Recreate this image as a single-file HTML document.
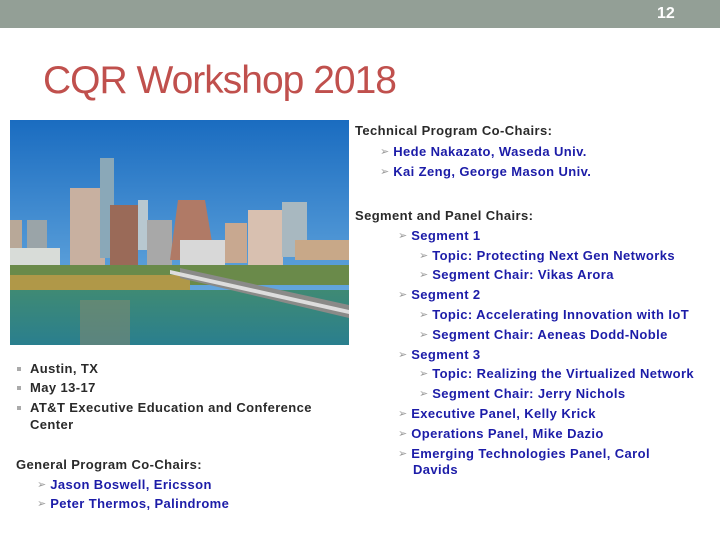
<!DOCTYPE html>
<html><head><meta charset="utf-8"><style>
body{margin:0;width:720px;height:540px;background:#fff;position:relative;overflow:hidden;font-family:"Liberation Sans",Arial,sans-serif}
.bar{position:absolute;left:0;top:0;width:720px;height:28px;background:#939f96}
.num{position:absolute;left:657px;top:5px;color:#fff;font-size:16px;font-weight:bold}
.title{position:absolute;left:43px;top:59px;color:#c0504d;font-size:39px;letter-spacing:-1px}
.t{position:absolute;font-size:13px;font-weight:bold;white-space:nowrap;line-height:16px;letter-spacing:0.4px}
.k{color:#2a2a2a}.b{color:#1c1ca8}
.a{color:#9a9a9a;font-family:"DejaVu Sans",sans-serif;font-size:11px;font-weight:normal;position:relative;top:-1px;margin-right:4px;letter-spacing:0}
.sq{position:absolute;width:4px;height:4px;background:#aaa}
</style></head><body>
<div class="bar"></div><div class="num">12</div>
<div class="title">CQR Workshop 2018</div>
<svg style="position:absolute;left:10px;top:120px" width="339" height="225" viewBox="0 0 339 225">
<defs><linearGradient id="s" x1="0" y1="0" x2="0" y2="1"><stop offset="0" stop-color="#1a6cc0"/><stop offset="1" stop-color="#7ab8e6"/></linearGradient>
<linearGradient id="w" x1="0" y1="0" x2="0" y2="1"><stop offset="0" stop-color="#3f8a74"/><stop offset="1" stop-color="#2a7f8e"/></linearGradient></defs>
<rect width="339" height="225" fill="url(#s)"/>
<rect x="0" y="100" width="12" height="40" fill="#b8a898"/>
<rect x="17" y="100" width="20" height="40" fill="#9aa4a8"/>
<rect x="60" y="68" width="35" height="80" fill="#c8b0a0"/>
<rect x="90" y="38" width="14" height="100" fill="#8aa8b8"/>
<rect x="100" y="85" width="28" height="65" fill="#9a6a58"/>
<rect x="128" y="80" width="10" height="50" fill="#b8c8d0"/>
<rect x="137" y="100" width="25" height="45" fill="#a8a8a8"/>
<polygon points="160,140 168,80 195,80 205,140" fill="#b07a66"/>
<rect x="170" y="120" width="45" height="25" fill="#d8d8d8"/>
<rect x="215" y="103" width="22" height="40" fill="#c8a890"/>
<rect x="238" y="90" width="35" height="55" fill="#d8c0b0"/>
<rect x="272" y="82" width="25" height="55" fill="#a8b8c0"/>
<rect x="285" y="120" width="54" height="20" fill="#c8a888"/>
<rect x="0" y="128" width="50" height="22" fill="#d8dcd8"/>
<rect x="0" y="145" width="339" height="20" fill="#6a8a4a"/>
<rect x="0" y="155" width="180" height="18" fill="#b09848"/>
<rect x="0" y="170" width="339" height="55" fill="url(#w)"/>
<rect x="70" y="180" width="50" height="45" fill="#8a8a70" opacity=".5"/>
<polygon points="170,148 339,185 339,198 170,158" fill="#8a8a88"/>
<polygon points="160,150 339,190 339,194 160,154" fill="#ddd"/>
</svg>
<div class="sq" style="left:17px;top:367px"></div>
<div class="sq" style="left:17px;top:386px"></div>
<div class="sq" style="left:17px;top:406px"></div>
<div class="t k" style="left:30px;top:361px">Austin, TX</div>
<div class="t k" style="left:30px;top:380px">May 13-17</div>
<div class="t k" style="left:30px;top:400px">AT&amp;T Executive Education and Conference</div>
<div class="t k" style="left:30px;top:417px">Center</div>
<div class="t k" style="left:16px;top:457px">General Program Co-Chairs:</div>
<div class="t b" style="left:37px;top:477px"><span class="a">➢</span>Jason Boswell, Ericsson</div>
<div class="t b" style="left:37px;top:496px"><span class="a">➢</span>Peter Thermos, Palindrome</div>

<div class="t k" style="left:355px;top:123px">Technical Program Co-Chairs:</div>
<div class="t b" style="left:380px;top:144px"><span class="a">➢</span>Hede Nakazato, Waseda Univ.</div>
<div class="t b" style="left:380px;top:164px"><span class="a">➢</span>Kai Zeng, George Mason Univ.</div>
<div class="t k" style="left:355px;top:208px">Segment and Panel Chairs:</div>
<div class="t b" style="left:398px;top:228px"><span class="a">➢</span>Segment 1</div>
<div class="t b" style="left:419px;top:248px"><span class="a">➢</span>Topic: Protecting Next Gen Networks</div>
<div class="t b" style="left:419px;top:267px"><span class="a">➢</span>Segment Chair: Vikas Arora</div>
<div class="t b" style="left:398px;top:287px"><span class="a">➢</span>Segment 2</div>
<div class="t b" style="left:419px;top:307px"><span class="a">➢</span>Topic: Accelerating Innovation with IoT</div>
<div class="t b" style="left:419px;top:327px"><span class="a">➢</span>Segment Chair: Aeneas Dodd-Noble</div>
<div class="t b" style="left:398px;top:347px"><span class="a">➢</span>Segment 3</div>
<div class="t b" style="left:419px;top:366px"><span class="a">➢</span>Topic: Realizing the Virtualized Network</div>
<div class="t b" style="left:419px;top:386px"><span class="a">➢</span>Segment Chair: Jerry Nichols</div>
<div class="t b" style="left:398px;top:406px"><span class="a">➢</span>Executive Panel, Kelly Krick</div>
<div class="t b" style="left:398px;top:426px"><span class="a">➢</span>Operations Panel, Mike Dazio</div>
<div class="t b" style="left:398px;top:446px"><span class="a">➢</span>Emerging Technologies Panel, Carol</div>
<div class="t b" style="left:413px;top:462px">Davids</div>
</body></html>
